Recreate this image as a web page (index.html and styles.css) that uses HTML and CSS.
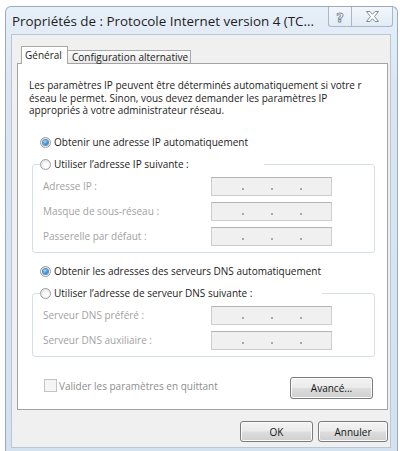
FILE: index.html
```html
<!DOCTYPE html>
<html lang="fr">
<head>
<meta charset="utf-8">
<title>Propriétés de : Protocole Internet version 4</title>
<link rel="stylesheet" href="styles.css">
</head>
<body>
<div class="window">
  <div class="titlebar">
    <span class="title">Propriétés de : Protocole Internet version 4 (TC...</span>
    <div class="caption-btns">
      <span class="cbtn help">
        <svg width="12" height="14" viewBox="0 0 12 14"><text x="6" y="12" text-anchor="middle" class="qglyph">?</text></svg>
      </span>
      <span class="cbtn close">
        <svg width="13" height="11" viewBox="0 0 13 11"><polygon points="0.5,0.5 4,0.5 6.5,3.3 9,0.5 12.5,0.5 8.5,5.5 12.5,10.5 9,10.5 6.5,7.7 4,10.5 0.5,10.5 4.5,5.5" class="xglyph"/></svg>
      </span>
    </div>
  </div>
  <div class="client">
    <div class="tabs">
      <div class="tab active">Général</div>
      <div class="tab">Configuration alternative</div>
    </div>
    <div class="panel">
      <p class="intro">Les paramètres IP peuvent être déterminés automatiquement si votre r<br>éseau le permet. Sinon, vous devez demander les paramètres IP<br>appropriés à votre administrateur réseau.</p>

      <div class="radio-row first"><span class="radio checked"></span><span>Obtenir une adresse IP automatiquement</span></div>
      <fieldset class="group">
        <legend class="radio-row legend-ip"><span class="radio"></span><span>Utiliser l’adresse IP suivante :</span></legend>
        <div class="field-row"><span class="flabel">Adresse IP :</span><span class="ipbox"><i></i><i></i><i></i></span></div>
        <div class="field-row"><span class="flabel">Masque de sous-réseau :</span><span class="ipbox"><i></i><i></i><i></i></span></div>
        <div class="field-row"><span class="flabel">Passerelle par défaut :</span><span class="ipbox"><i></i><i></i><i></i></span></div>
      </fieldset>

      <div class="radio-row second"><span class="radio checked"></span><span>Obtenir les adresses des serveurs DNS automatiquement</span></div>
      <fieldset class="group">
        <legend class="radio-row legend-dns"><span class="radio"></span><span>Utiliser l’adresse de serveur DNS suivante :</span></legend>
        <div class="field-row"><span class="flabel">Serveur DNS préféré :</span><span class="ipbox"><i></i><i></i><i></i></span></div>
        <div class="field-row"><span class="flabel">Serveur DNS auxiliaire :</span><span class="ipbox"><i></i><i></i><i></i></span></div>
      </fieldset>

      <div class="bottom-row">
        <span class="check"><span class="cbox"></span><span class="clabel">Valider les paramètres en quittant</span></span>
        <button class="btn advanced">Avancé...</button>
      </div>
    </div>
    <div class="footer">
      <button class="btn ok">OK</button>
      <button class="btn cancel">Annuler</button>
    </div>
  </div>
</div>
</body>
</html>
```
FILE: styles.css
```css
* { box-sizing: border-box; }

body {
  margin: 0;
  background: #ffffff;
  font-family: "Open Sans", "Noto Sans", sans-serif;
  font-size: 10px;
  color: #1b1b1b;
}

.window {
  margin: 6px 0 0 5px;
  width: 393px;
  height: 446px;
  border: 1px solid #9aabbd;
  border-bottom: none;
  border-radius: 6px 6px 0 0;
  background: linear-gradient(#e7eff8, #d9e6f2 80px, #d4e2f0);
  display: flex;
  flex-direction: column;
}

.titlebar {
  height: 27px;
  display: flex;
  align-items: flex-start;
}

.title {
  flex: 1;
  font-size: 13.4px;
  line-height: 18px;
  padding: 5px 0 0 6px;
  color: #1e1e1e;
  white-space: nowrap;
  overflow: hidden;
}

.caption-btns {
  display: flex;
  margin-right: 4px;
}

.cbtn {
  height: 20px;
  border: 1px solid #a9b8c8;
  border-top: none;
  background: linear-gradient(#f3f7fb, #e2ebf4);
  display: flex;
  align-items: center;
  justify-content: center;
}

.help {
  width: 23px;
  border-right: none;
  border-radius: 0 0 0 3px;
}

.close {
  width: 42px;
  border-radius: 0 0 3px 0;
}

.qglyph {
  font-family: "DejaVu Sans", sans-serif;
  font-size: 13px;
  font-weight: bold;
  fill: #ffffff;
  stroke: #7d8c9c;
  stroke-width: 0.9;
}

.xglyph {
  fill: #ffffff;
  stroke: #7d8c9c;
  stroke-width: 1;
  stroke-linejoin: round;
}

.client {
  margin-left: 5px;
  width: 380px;
  height: 414px;
  border: 1px solid #b7c7d6;
  background: #f0f0f0;
  display: flex;
  flex-direction: column;
}

.tabs {
  display: flex;
  align-items: flex-end;
  height: 18px;
  margin: 11px 0 -1px 9px;
  position: relative;
  z-index: 1;
}

.tab {
  height: 13px;
  margin-bottom: 1px;
  border: 1px solid #a7a7a7;
  border-bottom: none;
  background: linear-gradient(#fbfbfb, #e9e9e9);
  line-height: 12px;
  padding: 0 4px;
  white-space: nowrap;
  width: 124px;
  margin-left: -1px;
}

.tab.active {
  height: 18px;
  margin-bottom: 0;
  background: #ffffff;
  width: 47px;
  margin-left: 0;
  line-height: 16px;
  padding: 0 3px;
  position: relative;
  z-index: 2;
}

.panel {
  margin-left: 5px;
  width: 371px;
  height: 347px;
  background: #ffffff;
  border: 1px solid #a3a3a3;
  display: flex;
  flex-direction: column;
  align-items: flex-start;
}

.intro {
  margin: 15px 0 0 11px;
  line-height: 12.5px;
  white-space: nowrap;
}

.radio-row {
  display: flex;
  align-items: center;
  height: 13px;
  white-space: nowrap;
}

.radio-row.first {
  margin: 19px 0 0 22px;
}

.radio-row.second {
  margin: 12px 0 0 22px;
}

.radio {
  width: 11px;
  height: 11px;
  border-radius: 50%;
  border: 1px solid #9c9c9c;
  background: radial-gradient(circle at 60% 65%, #ffffff 20%, #e2e2e2 80%);
  margin-right: 3px;
  display: flex;
  align-items: center;
  justify-content: center;
  flex: none;
}

.radio.checked::after {
  content: "";
  width: 5px;
  height: 5px;
  border-radius: 50%;
  background: radial-gradient(circle at 40% 35%, #8fd0f7 10%, #2a7bc4 70%, #1c5a95 100%);
  box-shadow: 0 0 0 1px #4f8fc4;
}

.group {
  margin: 9px 0 0 14px;
  width: 343px;
  border: 1px solid #d5dfe5;
  border-radius: 3px;
  padding: 0 0 6px 10px;
  min-width: 0;
}

.group legend {
  padding: 0;
  margin-left: -3px;
}

.legend-ip { width: 224px; }
.legend-dns { width: 282px; }

.field-row {
  display: flex;
  align-items: center;
  height: 19px;
  margin-top: 6px;
}

.flabel {
  width: 168px;
  color: #a2a2a2;
}

.ipbox {
  width: 121px;
  height: 19px;
  border: 1px solid #cdcdcd;
  border-top-color: #b4b4b4;
  background: #f0f0f0;
  display: flex;
  align-items: flex-end;
  gap: 27px;
  padding: 0 0 5px 30px;
}

.ipbox i {
  width: 2px;
  height: 2px;
  background: #a8a8a8;
}

.bottom-row {
  display: flex;
  align-items: flex-start;
  width: 100%;
  margin-top: 20px;
  padding: 0 14px 0 26px;
}

.check {
  display: flex;
  align-items: center;
  margin-top: 2px;
}

.cbox {
  width: 13px;
  height: 13px;
  border: 1px solid #c4c4c4;
  background: #f5f5f5;
  margin-right: 2px;
}

.clabel {
  color: #8e8e8e;
}

.btn {
  font-family: inherit;
  font-size: 10px;
  color: #151515;
  height: 21px;
  padding: 0;
  border: 1px solid #7b7b7b;
  border-radius: 3px;
  background: linear-gradient(#f3f3f3 0%, #ebebeb 48%, #dddddd 52%, #cfcfcf 100%);
  box-shadow: inset 0 0 0 1px #fbfbfb;
}

.advanced {
  margin-left: auto;
  width: 83px;
  height: 22px;
}

.footer {
  display: flex;
  justify-content: flex-end;
  gap: 5px;
  margin-top: 11px;
  padding-right: 2px;
}

.ok { width: 73px; }
.cancel { width: 70px; }
```
